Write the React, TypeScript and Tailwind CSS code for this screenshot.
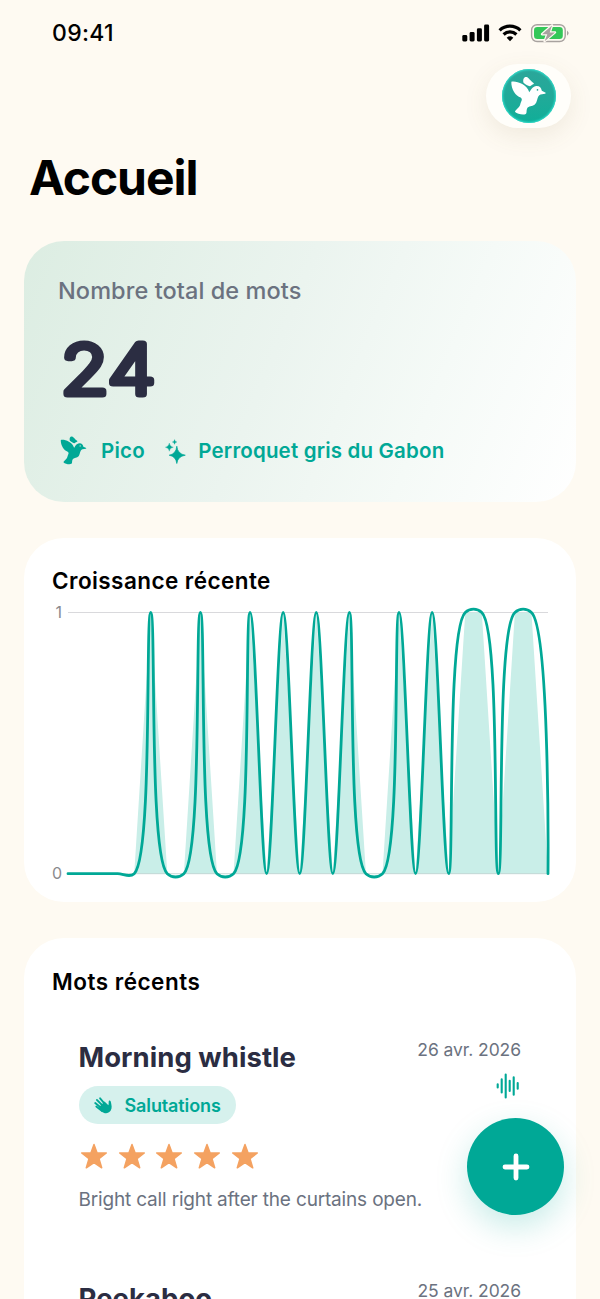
import React from "react";

type Point = { x: number; y: number };

const DAILY_COUNTS = [
  0, 0, 0, 0, 0, 1, 0, 0, 1, 0, 0, 1, 0, 1, 0, 1, 0, 1, 0, 0, 1, 0, 1, 0, 1, 1, 0, 1, 1, 0,
];

const WORDS = [
  {
    title: "Morning whistle",
    date: "26 avr. 2026",
    category: "Salutations",
    note: "Bright call right after the curtains open.",
  },
  {
    title: "Peekaboo",
    date: "25 avr. 2026",
  },
];

/** Centripetal Catmull-Rom spline through the points, as cubic Béziers. */
function splinePath(p: Point[]): string {
  let d = `M${p[0].x} ${p[0].y}`;
  for (let i = 0; i < p.length - 1; i++) {
    const p0 = p[Math.max(i - 1, 0)];
    const p1 = p[i];
    const p2 = p[i + 1];
    const p3 = p[Math.min(i + 2, p.length - 1)];
    const d01 = Math.hypot(p1.x - p0.x, p1.y - p0.y);
    const d12 = Math.hypot(p2.x - p1.x, p2.y - p1.y);
    const d23 = Math.hypot(p3.x - p2.x, p3.y - p2.y);
    const a01 = Math.sqrt(d01);
    const a12 = Math.sqrt(d12);
    const a23 = Math.sqrt(d23);
    let c1 = p1;
    let c2 = p2;
    if (d01 > 0) {
      const a = 2 * d01 + 3 * a01 * a12 + d12;
      const n = 3 * a01 * (a01 + a12);
      c1 = {
        x: (p1.x * a - p0.x * d12 + p2.x * d01) / n,
        y: (p1.y * a - p0.y * d12 + p2.y * d01) / n,
      };
    }
    if (d23 > 0) {
      const b = 2 * d23 + 3 * a23 * a12 + d12;
      const m = 3 * a23 * (a23 + a12);
      c2 = {
        x: (p2.x * b + p1.x * d23 - p3.x * d12) / m,
        y: (p2.y * b + p1.y * d23 - p3.y * d12) / m,
      };
    }
    d += `C${c1.x} ${c1.y} ${c2.x} ${c2.y} ${p2.x} ${p2.y}`;
  }
  return d;
}

function Bird({ className, eye }: { className: string; eye: string }) {
  return (
    <svg viewBox="211 226 109 122" className={className} fill="currentColor">
      <path d="M212 243C225 239 259 249 268 275C272 272 276 257 291 256C301 256 305 262 307 271L319 277Q320 279 317 280L303 282C291 287 295 302 287 311C280 320 270 316 263 323C257 331 262 340 257 343C248 348 230 342 224 337C221 332 237 326 240 313C242 304 249 298 241 292C226 288 211 266 212 243Z" />
      <path d="M250 246C247 234 252 226 260 228C266 230 271 240 282 247C284 250 274 252 270 257C263 255 256 251 250 246Z" />
      <circle cx="293.500" cy="268" r="2.600" fill={eye} />
    </svg>
  );
}

function Sparkles() {
  return (
    <svg viewBox="0 0 22 25" className="h-[25px] w-[22px]" fill="currentColor">
      <path d="M11.800 7.200Q12.600 15 20.300 16.200Q12.600 17.400 11.800 24.500Q11 17.400 4.200 16.200Q11 15 11.800 7.200Z" stroke="currentColor" strokeWidth=".7" strokeLinejoin="round" />
      <path d="M4.300 4Q4.700 7.600 8.300 8.200Q4.700 8.800 4.300 12.200Q3.900 8.800 .4 8.200Q3.900 7.600 4.300 4Z" stroke="currentColor" strokeWidth=".3" />
      <path d="M9.600 .4Q9.800 2.600 12 3Q9.800 3.400 9.600 5.400Q9.400 3.400 7.200 3Q9.400 2.600 9.600 .4Z" stroke="currentColor" strokeWidth=".2" />
    </svg>
  );
}

function WavingHand() {
  return (
    <svg viewBox="0 0 20 18" className="h-[18px] w-5" fill="currentColor">
      <path d="M6 11.200L11.500 5.600L15.400 9.200C16 7.600 15.300 5.600 16 4.800C17 4.100 17.800 5.300 18 6.600C18.400 9.200 19.500 12 17.600 14.800C15.200 18 11.200 17.700 8.600 15.400Z" />
      <g stroke="currentColor" strokeWidth="1.850" strokeLinecap="round">
        <path d="M9 15L3.300 10.600" />
        <path d="M9 12.500L2.200 7" />
        <path d="M10.500 10.500L3.900 3.900" />
        <path d="M13 9.300L7.100 2.300" />
      </g>
    </svg>
  );
}

function Star() {
  return (
    <svg viewBox="0 0 28 27" className="h-[27px] w-7" fill="#f4a261">
      <path
        d="M14 1.500L17.100 10H26.300L19 15.700L21.700 24.800L14 19.600L6.300 24.800L9 15.700L1.700 10H10.900Z"
        stroke="#f4a261"
        strokeWidth="1.500"
        strokeLinejoin="round"
      />
    </svg>
  );
}

function Waveform() {
  return (
    <svg viewBox="0 0 24 26" className="h-[26px] w-6" stroke="#00a896" strokeWidth="2.100" strokeLinecap="round">
      <path d="M1.700 11.300V14.500M5.700 6.400V19.500M9.700 1.500V24.500M13.700 7.700V18M17.700 4.200V21.700M21.700 10V15.800" />
    </svg>
  );
}

function StatusBar() {
  return (
    <div className="flex h-[66px] items-center justify-between pr-[31px] pl-[52px]">
      <span className="text-[23px] leading-none font-medium tracking-[0.300px]">09:41</span>
      <div className="flex items-center">
        <svg viewBox="0 0 28 18" className="h-[18px] w-7" fill="#000">
          <rect x="0.300" y="11" width="5" height="6.500" rx="1.400" />
          <rect x="7.600" y="8" width="5" height="9.500" rx="1.400" />
          <rect x="14.900" y="4.300" width="5" height="13.200" rx="1.400" />
          <rect x="22.100" y=".5" width="5" height="17" rx="1.400" />
        </svg>
        <svg viewBox="0 0 24 18" className="ml-2 h-[18px] w-6" fill="none" stroke="#000" strokeWidth="3.200">
          <path d="M1.600 6.300A15 15 0 0 1 22.400 6.300" />
          <path d="M5.600 10.500A9.300 9.300 0 0 1 18.400 10.500" />
          <path d="M8.700 13.700Q12 10.900 15.300 13.700L12 17.200Z" fill="#000" stroke="none" />
        </svg>
        <svg viewBox="0 0 39 20" className="ml-2 h-5 w-[39px]">
          <rect x="1.600" y="1.700" width="33.600" height="16.800" rx="5.500" fill="none" stroke="#a8a29f" strokeWidth="1.400" />
          <path d="M37 7.500Q38.700 9 38.700 10T37 12.700Z" fill="#a8a29f" />
          <rect x="4" y="4.100" width="28.800" height="12" rx="3.300" fill="#34c759" />
          <path d="M22 2.500L12 11.200H17.300L14.600 18.200L25 9.400H19.700Z" fill="#a8a29f" stroke="#fffaf2" strokeWidth="2.400" strokeLinejoin="round" paintOrder="stroke" />
        </svg>
      </div>
    </div>
  );
}

function TotalCard() {
  return (
    <section className="mx-6 mt-[33px] flex h-[261px] flex-col rounded-[40px] bg-[linear-gradient(112deg,#dcede2_0%,#ebf4ef_45%,#f5faf7_72%,#ffffff_100%)] pl-[34px]">
      <h2 className="mt-[35px] text-[23.500px] leading-[30px] font-medium tracking-[0.080px] whitespace-nowrap text-[#6b7280]">
        Nombre total de mots
      </h2>
      <svg className="mt-[25px] h-20 w-[120px] overflow-visible" viewBox="0 0 120 80">
        <text
          x="2.800"
          y="63"
          textLength="94.500"
          lengthAdjust="spacingAndGlyphs"
          fontFamily="Inter, sans-serif"
          fontSize="68"
          fontWeight="200"
          fill="#2b2d42"
          stroke="#2b2d42"
          strokeWidth="7.200"
          strokeLinejoin="round"
        >
          24
        </text>
      </svg>
      <div className="mt-[25px] flex h-[30px] items-center text-[20.500px] font-semibold whitespace-nowrap text-[#00a896]">
        <Bird className="ml-[2px] h-[29px] w-[27px] -translate-y-px" eye="#e3f1e9" />
        <span className="ml-[14px] tracking-[0.200px]">Pico</span>
        <span className="ml-5 flex">
          <Sparkles />
        </span>
        <span className="ml-[11.500px] tracking-[0.180px]">Perroquet gris du Gabon</span>
      </div>
    </section>
  );
}

function GrowthCard() {
  const left = 4;
  const top = 8.500;
  const base = 269.700;
  const step = 480 / (DAILY_COUNTS.length - 1);
  const points = DAILY_COUNTS.map((v, i) => ({ x: left + i * step, y: base - v * (base - top) }));
  const area = `M${left} ${base}` + points.map((p) => `L${p.x} ${p.y}`).join("") + "Z";
  return (
    <section className="mx-6 mt-9 h-[364px] rounded-[40px] bg-white pl-7">
      <h2 className="pt-7 text-[22.500px] leading-[30px] font-semibold tracking-[0.430px] whitespace-nowrap">
        Croissance récente
      </h2>
      <div className="mt-2 flex">
        <div className="flex h-[278px] w-3 flex-col items-end justify-between text-[16px] leading-[17px] text-[#8a8a8e]">
          <span className="translate-x-[-2px]">1</span>
          <span className="translate-x-[-2px]">0</span>
        </div>
        <svg viewBox="0 0 488 280" className="h-[280px] w-[488px] overflow-visible">
          <path d="M4 8.500H484" stroke="#d9d9dc" strokeWidth="1" />
          <path d={area} fill="#c9eee8" />
          <path d="M4 269.700H484" stroke="#bcd0cd" strokeWidth=".8" />
          <path d={splinePath(points)} fill="none" stroke="#00a896" strokeWidth="2.800" strokeLinecap="round" strokeLinejoin="round" />
        </svg>
      </div>
    </section>
  );
}

function RecentCard() {
  return (
    <section className="mx-6 mt-9 h-[700px] rounded-[40px] bg-white px-7">
      <h2 className="pt-7 text-[22.500px] leading-[32px] font-semibold tracking-[0.500px] whitespace-nowrap">
        Mots récents
      </h2>
      {WORDS.map((word) => (
        <article
          key={word.title}
          className="mt-[26px] flex h-[214.500px] justify-between pt-[15px] pr-[27px] pl-[26.500px] whitespace-nowrap"
        >
          <div>
            <h3 className="text-[27.500px] leading-9 font-bold tracking-[0.050px] text-[#2b2d42]">{word.title}</h3>
            {word.category && (
              <div className="mt-[11px] inline-flex h-[38px] items-center rounded-full bg-[#d6f1ed] pr-[15px] pl-[14px] text-[18px] font-semibold tracking-[-0.120px] text-[#00a896]">
                <WavingHand />
                <span className="ml-3">{word.category}</span>
              </div>
            )}
            {word.note && (
              <>
                <div className="mt-[18.500px] flex gap-[9.700px] pl-[1.500px]">
                  <Star />
                  <Star />
                  <Star />
                  <Star />
                  <Star />
                </div>
                <p className="mt-4 text-[19px] leading-7 tracking-[-0.170px] text-[#6b7280]">{word.note}</p>
              </>
            )}
          </div>
          <div className="flex w-0 flex-col items-end">
            <span className="text-[17.500px] leading-[22px] tracking-[-0.070px] text-[#6b7280]">{word.date}</span>
            <span className="mt-3 mr-px">
              <Waveform />
            </span>
          </div>
        </article>
      ))}
    </section>
  );
}

export default function App() {
  return (
    <div className="relative h-[1299px] w-[600px] overflow-hidden bg-[#fefaf2] font-['Inter',sans-serif] text-black">
      <StatusBar />
      <header>
        <div className="mt-[-2px] mr-[29px] ml-auto flex h-16 w-[85px] items-center justify-center rounded-full bg-[#fffefa] shadow-[0_8px_24px_rgba(120,95,60,0.10)]">
          <div className="flex h-[54px] w-[54px] items-center justify-center rounded-full bg-linear-to-b from-[#2ba69a] to-[#0fae98] shadow-[inset_0_0_2px_1px_#2fe0cf]">
            <Bird className="mr-px h-[40px] w-[35px] text-white" eye="#1fa898" />
          </div>
        </div>
        <h1 className="mt-[20px] pl-[29px] text-[48px] leading-[60px] font-bold tracking-[-1.050px]">Accueil</h1>
      </header>
      <TotalCard />
      <GrowthCard />
      <RecentCard />
      <button
        aria-label="Ajouter"
        className="absolute top-[1118px] left-[467px] flex h-[97px] w-[97px] items-center justify-center rounded-full bg-[#00a896] shadow-[0_12px_32px_rgba(0,168,150,0.22)]"
      >
        <svg viewBox="0 0 28 28" className="h-7 w-7" stroke="#fff" strokeWidth="4.800" strokeLinecap="round">
          <path d="M14 3V25M3 14H25" />
        </svg>
      </button>
    </div>
  );
}
